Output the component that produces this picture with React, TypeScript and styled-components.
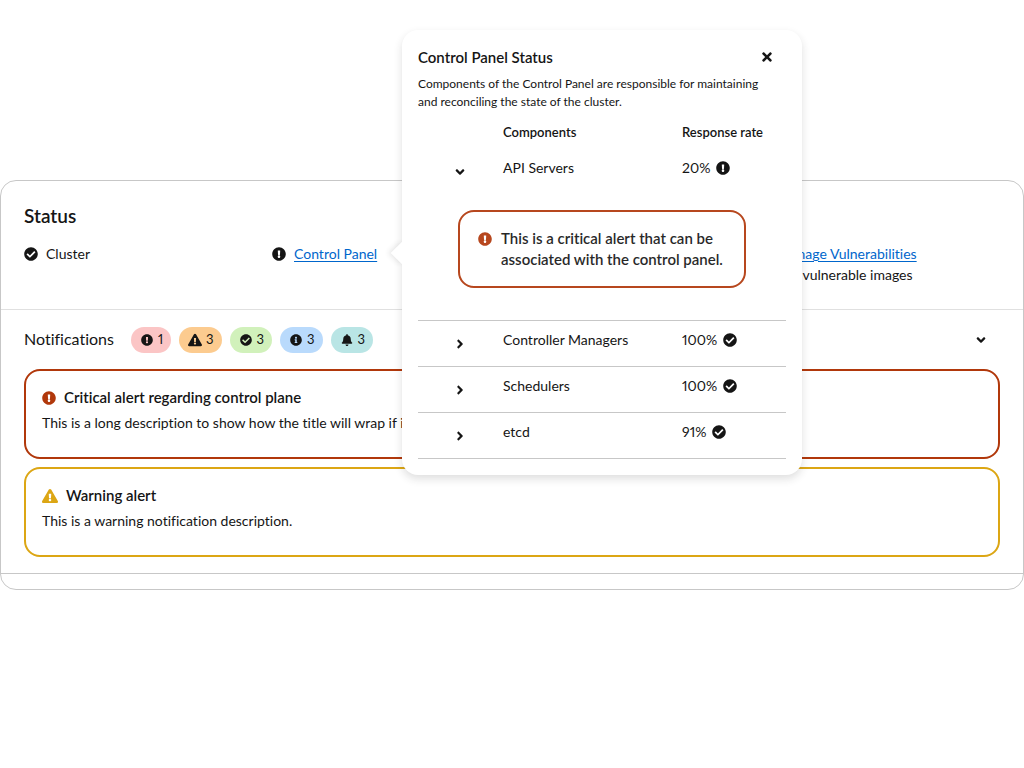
import React, { useState } from "react";
import styled, { createGlobalStyle } from "styled-components";
import {
  FaAngleDown,
  FaAngleRight,
  FaBell,
  FaCheckCircle,
  FaExclamationCircle,
  FaExclamationTriangle,
  FaInfoCircle,
  FaTimes,
} from "react-icons/fa";

const color = {
  text: "#151515",
  link: "#0066cc",
  border: "#c7c7c7",
  divider: "#e0e0e0",
  danger: "#b1380b",
  warning: "#dca614",
};

const GlobalStyle = createGlobalStyle`
  *, *::before, *::after { box-sizing: border-box; }
  body {
    margin: 0;
    background: #fff;
    color: ${color.text};
    font: 400 14px/21px Lato, "Liberation Sans", sans-serif;
    font-variant-ligatures: none;
    font-variant-numeric: proportional-nums;
  }
  h2, h3, h4, p { margin: 0; }
  svg { display: block; flex: none; }
`;

const Page = styled.main`
  padding: 180px 0 40px;
`;

const Card = styled.section`
  border: 1px solid ${color.border};
  border-radius: 16px;
  padding-bottom: 15px;
`;

const StatusSection = styled.div`
  padding: 24px 23px;
`;

const CardTitle = styled.h2`
  font-size: 19px;
  line-height: 22px;
  font-weight: 600;
  margin-bottom: 16px;
`;

const StatusGrid = styled.div`
  display: grid;
  grid-template-columns: repeat(4, 1fr);
  column-gap: 16px;
`;

const StatusItem = styled.div<{ $column?: number }>`
  position: relative;
  grid-column: ${(p) => p.$column ?? "auto"};
  display: flex;
  align-items: flex-start;
  gap: 8px;
  min-height: 42px;
`;

const StatusIcon = styled.span<{ $tone?: string; $wide?: boolean }>`
  display: inline-flex;
  align-items: center;
  height: 21px;
  font-size: ${(p) => (p.$wide ? "16px" : "14px")};
  color: ${(p) => p.$tone ?? color.text};
`;

const StatusLink = styled.a`
  display: block;
  color: ${color.link};
  text-underline-offset: 2px;
  text-decoration-thickness: 1px;
`;

const NotificationSection = styled.div`
  border-top: 1px solid ${color.divider};
  border-bottom: 1px solid ${color.border};
  padding: 0 23px 16px;
`;

const NotificationHeader = styled.div`
  display: flex;
  align-items: center;
  gap: 17px;
  height: 59px;
`;

const NotificationTitle = styled.h3`
  padding-bottom: 2px;
  font-size: 16px;
  line-height: 24px;
  font-weight: 400;
`;

const BadgeList = styled.div`
  display: flex;
  gap: 8px;
`;

const Badge = styled.span<{ $fill: string }>`
  display: inline-flex;
  align-items: center;
  gap: 3px;
  height: 26px;
  padding: 0 8px;
  border-radius: 13px;
  background: ${(p) => p.$fill};
  font-size: 13px;
`;

const BadgeIcon = styled.span<{ $wide?: boolean }>`
  display: flex;
  justify-content: center;
  width: 16px;
  font-size: ${(p) => (p.$wide ? "14px" : "12px")};
`;

const IconButton = styled.button`
  display: flex;
  align-items: center;
  justify-content: center;
  width: 38px;
  height: 28px;
  padding: 0;
  border: 0;
  background: none;
  color: inherit;
  font-size: 14px;
  cursor: pointer;
`;

const SectionToggle = styled(IconButton)`
  margin-left: auto;
`;

const AlertStack = styled.div`
  display: grid;
  gap: 8px;
`;

const Alert = styled.div<{ $tone: string }>`
  border: 2px solid ${(p) => p.$tone};
  border-radius: 16px;
  padding: 16px 16px 24px;
`;

const InlineAlert = styled(Alert)`
  display: flex;
  gap: 9px;
  padding: 16px 18px;
  opacity: 0.92;
`;

const AlertHeader = styled.div`
  display: flex;
  gap: 8px;
  margin-bottom: 4px;
`;

const AlertTitle = styled.h4`
  font-size: 15px;
  line-height: 21px;
  font-weight: 600;
`;

const Popover = styled.div`
  position: absolute;
  z-index: 1;
  top: -213px;
  left: 130px;
  width: 400px;
  padding: 16px;
  border-radius: 16px;
  background: #fff;
  box-shadow: 0 4px 9px rgba(41, 41, 41, 0.15);

  &::before {
    content: "";
    position: absolute;
    top: 215px;
    left: -8px;
    width: 16px;
    height: 16px;
    background: #fff;
    box-shadow: -2px 2px 5px rgba(41, 41, 41, 0.1);
    transform: rotate(45deg);
    clip-path: polygon(-10px -10px, 16px 16px, 26px 26px, -10px 26px);
  }
`;

const PopoverHeader = styled.div`
  display: flex;
  align-items: center;
  justify-content: space-between;
  height: 22px;
  margin-bottom: 7px;
`;

const PopoverTitle = styled.h3`
  font-size: 15px;
  line-height: 21px;
  font-weight: 600;
`;

const PopoverText = styled.p`
  padding-right: 16px;
  font-size: 12px;
  line-height: 18px;
`;

const ComponentTable = styled.table`
  width: 100%;
  border-collapse: collapse;
  table-layout: fixed;
  text-align: left;
`;

const HeadCell = styled.th<{ $width?: string }>`
  width: ${(p) => p.$width ?? "auto"};
  height: 38px;
  padding: 4px 16px 0;
  font-size: 13px;
  line-height: 18px;
  font-weight: 600;
`;

const Row = styled.tr<{ $lined?: boolean }>`
  border-bottom: ${(p) => (p.$lined ? `1px solid ${color.border}` : "0")};
`;

const Cell = styled.td`
  padding: 8px 16px;
  vertical-align: top;
`;

const ToggleCell = styled(Cell)`
  padding: 9px 8px 8px 23px;
`;

const DetailCell = styled.td`
  padding: 16px 40px 32px;
`;

const Rate = styled.span`
  display: inline-flex;
  align-items: center;
  gap: 6px;
`;

type Tone = "ok" | "alert";

const components: { name: string; rate: string; tone: Tone; detail?: string }[] = [
  {
    name: "API Servers",
    rate: "20%",
    tone: "alert",
    detail: "This is a critical alert that can be associated with the control panel.",
  },
  { name: "Controller Managers", rate: "100%", tone: "ok" },
  { name: "Schedulers", rate: "100%", tone: "ok" },
  { name: "etcd", rate: "91%", tone: "ok" },
];

const badges = [
  { label: "critical", count: 1, fill: "#fbc5c5", icon: <FaExclamationCircle /> },
  { label: "warning", count: 3, fill: "#fccb8f", icon: <FaExclamationTriangle />, wide: true },
  { label: "success", count: 3, fill: "#d1f1bb", icon: <FaCheckCircle /> },
  { label: "info", count: 3, fill: "#b9dafc", icon: <FaInfoCircle /> },
  { label: "custom", count: 3, fill: "#b9e5e5", icon: <FaBell /> },
];

function toneIcon(tone: Tone) {
  return tone === "ok" ? <FaCheckCircle /> : <FaExclamationCircle />;
}

function ControlPanelPopover({ onClose }: { onClose: () => void }) {
  const [expanded, setExpanded] = useState<string | null>("API Servers");

  return (
    <Popover role="dialog" aria-labelledby="popover-title">
      <PopoverHeader>
        <PopoverTitle id="popover-title">Control Panel Status</PopoverTitle>
        <IconButton type="button" aria-label="Close" onClick={onClose}>
          <FaTimes />
        </IconButton>
      </PopoverHeader>
      <PopoverText>
        Components of the Control Panel are responsible for maintaining and reconciling the state of the cluster.
      </PopoverText>
      <ComponentTable>
        <thead>
          <tr>
            <HeadCell $width="69px" aria-label="Toggle" />
            <HeadCell>Components</HeadCell>
            <HeadCell $width="120px">Response rate</HeadCell>
          </tr>
        </thead>
        <tbody>
          {components.map((c) => {
            const open = expanded === c.name && Boolean(c.detail);
            return (
              <React.Fragment key={c.name}>
                <Row $lined={!open}>
                  <ToggleCell>
                    <IconButton
                      type="button"
                      aria-label={`Details of ${c.name}`}
                      aria-expanded={open}
                      onClick={() => setExpanded(open ? null : c.name)}
                    >
                      {open ? <FaAngleDown /> : <FaAngleRight />}
                    </IconButton>
                  </ToggleCell>
                  <Cell>{c.name}</Cell>
                  <Cell>
                    <Rate>
                      {c.rate}
                      <StatusIcon>{toneIcon(c.tone)}</StatusIcon>
                    </Rate>
                  </Cell>
                </Row>
                {open && (
                  <Row $lined>
                    <DetailCell colSpan={3}>
                      <InlineAlert $tone={color.danger}>
                        <StatusIcon $tone={color.danger}>
                          <FaExclamationCircle />
                        </StatusIcon>
                        <AlertTitle>{c.detail}</AlertTitle>
                      </InlineAlert>
                    </DetailCell>
                  </Row>
                )}
              </React.Fragment>
            );
          })}
        </tbody>
      </ComponentTable>
    </Popover>
  );
}

export default function App() {
  const [popoverOpen, setPopoverOpen] = useState(true);
  const [listOpen, setListOpen] = useState(true);

  return (
    <>
      <GlobalStyle />
      <Page>
        <Card>
          <StatusSection>
            <CardTitle>Status</CardTitle>
            <StatusGrid>
              <StatusItem>
                <StatusIcon>
                  <FaCheckCircle />
                </StatusIcon>
                <span>Cluster</span>
              </StatusItem>
              <StatusItem>
                <StatusIcon>
                  <FaExclamationCircle />
                </StatusIcon>
                <StatusLink href="#control-panel" onClick={() => setPopoverOpen(true)}>
                  Control Panel
                </StatusLink>
                {popoverOpen && <ControlPanelPopover onClose={() => setPopoverOpen(false)} />}
              </StatusItem>
              <StatusItem $column={4}>
                <StatusIcon>
                  <FaCheckCircle />
                </StatusIcon>
                <div>
                  <StatusLink href="#image-vulnerabilities">Image Vulnerabilities</StatusLink>
                  <span>0 vulnerable images</span>
                </div>
              </StatusItem>
            </StatusGrid>
          </StatusSection>
          <NotificationSection>
            <NotificationHeader>
              <NotificationTitle>Notifications</NotificationTitle>
              <BadgeList>
                {badges.map((b) => (
                  <Badge key={b.label} $fill={b.fill} title={b.label}>
                    <BadgeIcon $wide={b.wide}>{b.icon}</BadgeIcon>
                    {b.count}
                  </Badge>
                ))}
              </BadgeList>
              <SectionToggle
                type="button"
                aria-label="Toggle notifications"
                aria-expanded={listOpen}
                onClick={() => setListOpen(!listOpen)}
              >
                {listOpen ? <FaAngleDown /> : <FaAngleRight />}
              </SectionToggle>
            </NotificationHeader>
            {listOpen && (
              <AlertStack>
                <Alert $tone={color.danger}>
                  <AlertHeader>
                    <StatusIcon $tone={color.danger}>
                      <FaExclamationCircle />
                    </StatusIcon>
                    <AlertTitle>Critical alert regarding control plane</AlertTitle>
                  </AlertHeader>
                  <p>This is a long description to show how the title will wrap if it</p>
                </Alert>
                <Alert $tone={color.warning}>
                  <AlertHeader>
                    <StatusIcon $tone={color.warning} $wide>
                      <FaExclamationTriangle />
                    </StatusIcon>
                    <AlertTitle>Warning alert</AlertTitle>
                  </AlertHeader>
                  <p>This is a warning notification description.</p>
                </Alert>
              </AlertStack>
            )}
          </NotificationSection>
        </Card>
      </Page>
    </>
  );
}
